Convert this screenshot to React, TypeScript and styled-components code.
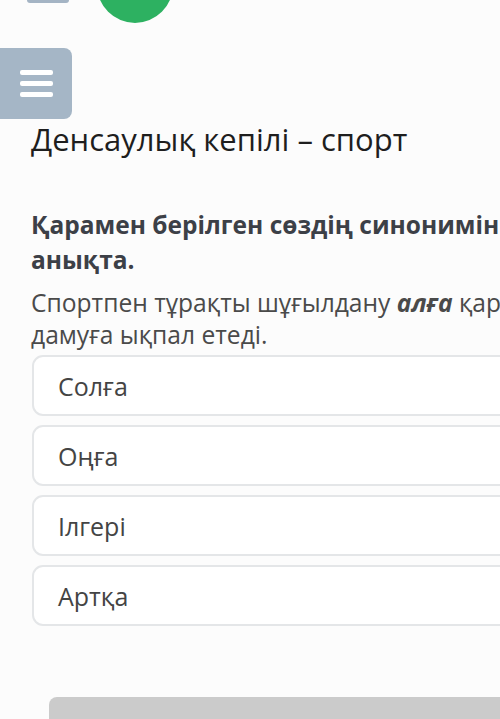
import React from "react";
import styled, { createGlobalStyle } from "styled-components";

const Global = createGlobalStyle`
  html, body { margin: 0; padding: 0; background: #fcfcfc; overflow: hidden; }
  body { font-family: "Open Sans", "Noto Sans", sans-serif; }
`;

const Page = styled.div`
  width: 500px;
  height: 719px;
  overflow: hidden;
  background: #fcfcfc;
`;

const TopStrip = styled.div`
  height: 23px;
  display: flex;
  align-items: flex-start;
  padding-left: 27px;
`;

const TabBar = styled.div`
  width: 42px;
  height: 43px;
  margin-top: -40px;
  background: #a4b4c4;
  border-radius: 3px;
`;

const Circle = styled.div`
  width: 76px;
  height: 76px;
  margin-top: -53px;
  margin-left: 28px;
  border-radius: 50%;
  background: #2db161;
`;

const MenuButton = styled.div`
  margin-top: 25px;
  width: 72px;
  height: 71px;
  background: #a5b6c6;
  border-radius: 0 8px 8px 0;
  display: flex;
  flex-direction: column;
  justify-content: center;
  align-items: center;
  gap: 6px;
`;

const MenuLine = styled.span`
  display: block;
  width: 33px;
  height: 5px;
  border-radius: 2px;
  background: #ffffff;
`;

const Content = styled.div`
  width: 560px;
  padding-left: 31px;
  box-sizing: border-box;
`;

const Title = styled.h1`
  margin: 0;
  font-size: 31px;
  line-height: 40px;
  font-weight: 400;
  color: #1e1e1e;
  white-space: nowrap;
`;

const Question = styled.p`
  margin: 48px 0 0;
  font-size: 24.5px;
  line-height: 35px;
  font-weight: 700;
  color: #3c4047;
`;

const Statement = styled.p`
  margin: 10px 0 0;
  font-size: 24.6px;
  line-height: 32px;
  font-weight: 400;
  color: #4a4a4a;
`;

const Options = styled.div`
  margin-top: 4px;
  display: flex;
  flex-direction: column;
  gap: 9px;
  padding-left: 1px;
`;

const Option = styled.div`
  height: 61px;
  box-sizing: border-box;
  border: 2px solid #e4e6e8;
  border-radius: 11px;
  background: #ffffff;
  display: flex;
  align-items: center;
  padding-left: 24px;
  font-size: 25px;
  color: #444444;
`;

const SubmitBar = styled.div`
  margin: 71px 0 0 18px;
  height: 40px;
  border-radius: 8px;
  background: #cbcbcb;
`;

const options = ["Солға", "Оңға", "Ілгері", "Артқа"];

export default function App() {
  return (
    <Page>
      <Global />
      <TopStrip>
        <TabBar />
        <Circle />
      </TopStrip>
      <MenuButton>
        <MenuLine />
        <MenuLine />
        <MenuLine />
      </MenuButton>
      <Content>
        <Title>Денсаулық кепілі – спорт</Title>
        <Question>Қарамен берілген сөздің синонимін анықта.</Question>
        <Statement>
          Спортпен тұрақты шұғылдану <b><i>алға</i></b> қарай дамуға ықпал етеді.
        </Statement>
        <Options>
          {options.map((o) => (
            <Option key={o}>{o}</Option>
          ))}
        </Options>
        <SubmitBar />
      </Content>
    </Page>
  );
}
